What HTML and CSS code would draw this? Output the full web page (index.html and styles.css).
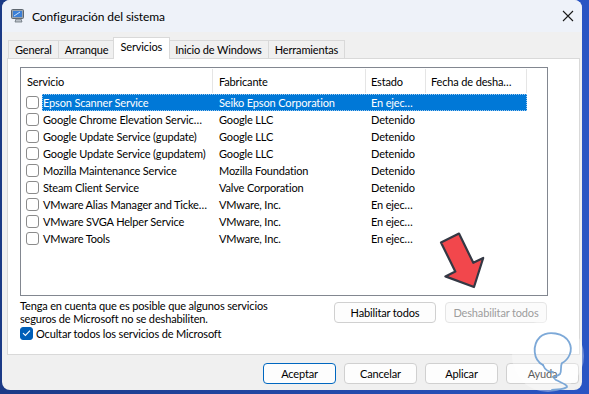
FILE: index.html
```html
<!DOCTYPE html>
<html lang="es">
<head>
  <meta charset="UTF-8">
  <title>Configuración del sistema</title>
  <link rel="stylesheet" href="styles.css">
</head>
<body>

  <div class="ventana">
    <!-- Barra de título -->
    <div class="titulo">
      <svg class="icono" width="16" height="16" viewBox="0 0 16 16">
        <rect x="1.5" y="1.5" width="12" height="9" rx="1" fill="#9aa3ad" stroke="#5d6670"/>
        <rect x="3" y="3" width="9" height="6" fill="#3b7fd6"/>
        <path d="M4 8 L10 4" stroke="#cfe3fb" stroke-width="1"/>
        <path d="M6 11 L5 14 H12 L11 11 Z" fill="#b9c0c8" stroke="#6a737c" stroke-width="0.8"/>
      </svg>
      <span class="titulo-texto">Configuración del sistema</span>
      <svg class="cerrar" width="12" height="12" viewBox="0 0 12 12">
        <path d="M1 1 L11 11 M11 1 L1 11" stroke="#1a1a1a" stroke-width="1.1"/>
      </svg>
    </div>

    <div class="cuerpo">
      <!-- Pestañas -->
      <div class="pestanas">
        <div class="pestana">General</div>
        <div class="pestana">Arranque</div>
        <div class="pestana activa">Servicios</div>
        <div class="pestana">Inicio de Windows</div>
        <div class="pestana">Herramientas</div>
      </div>

      <div class="panel">
        <div class="lista">
          <div class="cabecera">
            <div class="col c1">Servicio</div>
            <div class="col c2">Fabricante</div>
            <div class="col c3">Estado</div>
            <div class="col c4">Fecha de desha…</div>
          </div>

          <div class="fila">
            <span class="check"></span>
            <div class="datos seleccionada">
              <span>Epson Scanner Service</span><span>Seiko Epson Corporation</span><span>En ejec…</span><span></span>
            </div>
          </div>
          <div class="fila">
            <span class="check"></span>
            <div class="datos">
              <span>Google Chrome Elevation Servic…</span><span>Google LLC</span><span>Detenido</span><span></span>
            </div>
          </div>
          <div class="fila">
            <span class="check"></span>
            <div class="datos">
              <span>Google Update Service (gupdate)</span><span>Google LLC</span><span>Detenido</span><span></span>
            </div>
          </div>
          <div class="fila">
            <span class="check"></span>
            <div class="datos">
              <span>Google Update Service (gupdatem)</span><span>Google LLC</span><span>Detenido</span><span></span>
            </div>
          </div>
          <div class="fila">
            <span class="check"></span>
            <div class="datos">
              <span>Mozilla Maintenance Service</span><span>Mozilla Foundation</span><span>Detenido</span><span></span>
            </div>
          </div>
          <div class="fila">
            <span class="check"></span>
            <div class="datos">
              <span>Steam Client Service</span><span>Valve Corporation</span><span>Detenido</span><span></span>
            </div>
          </div>
          <div class="fila">
            <span class="check"></span>
            <div class="datos">
              <span>VMware Alias Manager and Ticke…</span><span>VMware, Inc.</span><span>En ejec…</span><span></span>
            </div>
          </div>
          <div class="fila">
            <span class="check"></span>
            <div class="datos">
              <span>VMware SVGA Helper Service</span><span>VMware, Inc.</span><span>En ejec…</span><span></span>
            </div>
          </div>
          <div class="fila">
            <span class="check"></span>
            <div class="datos">
              <span>VMware Tools</span><span>VMware, Inc.</span><span>En ejec…</span><span></span>
            </div>
          </div>
        </div>

        <div class="inferior">
          <div class="nota">
            <p>Tenga en cuenta que es posible que algunos servicios<br>seguros de Microsoft no se deshabiliten.</p>
            <label class="ocultar">
              <span class="check marcado">
                <svg width="9" height="8" viewBox="0 0 9 8"><path d="M1 4.2 L3.4 6.4 L8 1.6" fill="none" stroke="#fff" stroke-width="1.1"/></svg>
              </span>
              Ocultar todos los servicios de Microsoft
            </label>
          </div>
          <div class="acciones">
            <button class="boton">Habilitar todos</button>
            <button class="boton" disabled>Deshabilitar todos</button>
          </div>
        </div>
      </div>

      <!-- Botones del diálogo -->
      <div class="pie">
        <button class="boton principal">Aceptar</button>
        <button class="boton">Cancelar</button>
        <button class="boton">Aplicar</button>
        <button class="boton">Ayuda</button>
      </div>
    </div>
  </div>

  <!-- Flecha roja -->
  <svg class="flecha" width="589" height="394" viewBox="0 0 589 394">
    <polygon points="441,242.4 459,233.6 473.3,262.8 483.2,258 474,287 445.4,276.4 455.3,271.6" fill="#f2474c" stroke="#343844" stroke-width="2.2" stroke-linejoin="round"/>
  </svg>

  <!-- Marca de agua -->
  <svg class="marca" width="589" height="394" viewBox="0 0 589 394">
    <circle cx="548" cy="356" r="36" fill="#ffffff" opacity="0.35"/>
    <path d="M543 365 C533 360 532 345 540 337 C548 330 564 333 569 342 C574 351 568 360 562 363 C560 366 562 371 560 374 C556 378 550 375 556 380 C562 383 568 385 567 387 C563 390 558 389 552 390" fill="none" stroke="#6fa0d4" stroke-width="1.8" stroke-linecap="round" opacity="0.9"/>
    <path d="M543 365 C545 370 549 372 553 372" fill="none" stroke="#6fa0d4" stroke-width="1.8" stroke-linecap="round" opacity="0.9"/>
  </svg>

</body>
</html>
```

FILE: styles.css
```css
body {
  margin: 0;
  width: 589px;
  height: 394px;
  overflow: hidden;
  background: linear-gradient(90deg, #1b3a86, #2a55c4);
  font-family: Lato, sans-serif;
  font-size: 11px;
  letter-spacing: -0.15px;
  color: #000;
  position: relative;
}

.ventana {
  margin-left: 2px;
  width: 580px;
  height: 390px;
  border-radius: 8px;
  overflow: hidden;
  background-color: #f0f0f0;
}

.titulo {
  height: 32px;
  background-color: #eef2f9;
  display: flex;
  align-items: center;
}

.icono {
  margin-left: 8px;
}

.titulo-texto {
  margin-left: 6px;
  font-size: 12px;
  letter-spacing: -0.1px;
  flex: 1;
}

.cerrar {
  margin-right: 8px;
}

.cuerpo {
  padding: 6px 3px 0 5px;
}

.pestanas {
  display: flex;
  align-items: flex-end;
  height: 20px;
  padding-left: 1px;
  position: relative;
  z-index: 1;
}

.pestana {
  height: 17px;
  line-height: 17px;
  padding: 0 6px;
  border: 1px solid #d9d9d9;
  border-bottom: none;
  margin-right: -1px;
  background-color: #f0f0f0;
  white-space: nowrap;
}

.pestana.activa {
  height: 21px;
  line-height: 18px;
  padding: 0 7px;
  margin: 0 -1px 0 -2px;
  background-color: #fff;
  position: relative;
  top: 1px;
}

.pestana.activa + .pestana {
  margin-left: -1px;
}

.panel {
  height: 297px;
  background-color: #fff;
  border: 1px solid #d9d9d9;
  padding: 8px 0 0 12px;
  box-sizing: border-box;
  width: 573px;
}

.lista {
  width: 528px;
  height: 229px;
  border: 1px solid #828790;
  box-sizing: border-box;
}

.cabecera {
  display: grid;
  grid-template-columns: 192px 153px 60px 101px;
  height: 26px;
}

.col {
  padding: 1px 0 0 6px;
  line-height: 24px;
  border-right: 1px solid #e5e5e5;
  margin: 1px 0;
  white-space: nowrap;
  overflow: hidden;
}

.c3, .c4 {
  padding-left: 5px;
}

.fila {
  display: flex;
  height: 17px;
  align-items: center;
}

.check {
  width: 11px;
  height: 11px;
  border: 1px solid #8b8b8b;
  border-radius: 3px;
  box-sizing: content-box;
  margin: 0 3px 0 5px;
  flex: none;
  display: inline-flex;
  align-items: center;
  justify-content: center;
}

.datos {
  display: grid;
  grid-template-columns: 171px 153px 60px 101px;
  height: 17px;
  line-height: 17px;
  box-sizing: border-box;
}

.datos span {
  white-space: nowrap;
  overflow: hidden;
  padding-left: 1px;
}

.datos span:nth-child(2) {
  padding-left: 6px;
}

.datos span:nth-child(3) {
  padding-left: 5px;
}

.seleccionada {
  background-color: #0078d7;
  color: #fff;
  outline: 1px dotted #9fc9ef;
  outline-offset: -1px;
}

.inferior {
  display: flex;
  justify-content: space-between;
  width: 527px;
  margin-top: 3px;
}

.nota p {
  margin: 0;
  line-height: 13px;
}

.ocultar {
  display: flex;
  align-items: center;
  margin-top: 1px;
  height: 14px;
}

.check.marcado {
  margin: 0 3px 0 0;
  background-color: #005fb8;
  border-color: #005fb8;
}

.acciones {
  display: flex;
  gap: 9px;
  margin-top: 3px;
}

.boton {
  font-family: inherit;
  font-size: 11px;
  letter-spacing: -0.15px;
  background-color: #fdfdfd;
  border: 1px solid #d0d0d0;
  border-radius: 4px;
  height: 21px;
  width: 102px;
  padding: 0;
  color: #000;
  white-space: nowrap;
}

.boton:disabled {
  color: #9d9d9d;
  border-color: #e5e5e5;
  background-color: #fbfbfb;
}

.pie {
  display: flex;
  justify-content: flex-end;
  gap: 8px;
  margin-top: 8px;
}

.pie .boton {
  width: 73px;
  height: 21px;
}

.boton.principal {
  border-color: #0067c0;
}

.flecha, .marca {
  position: absolute;
  left: 0;
  top: 0;
  pointer-events: none;
}
```
